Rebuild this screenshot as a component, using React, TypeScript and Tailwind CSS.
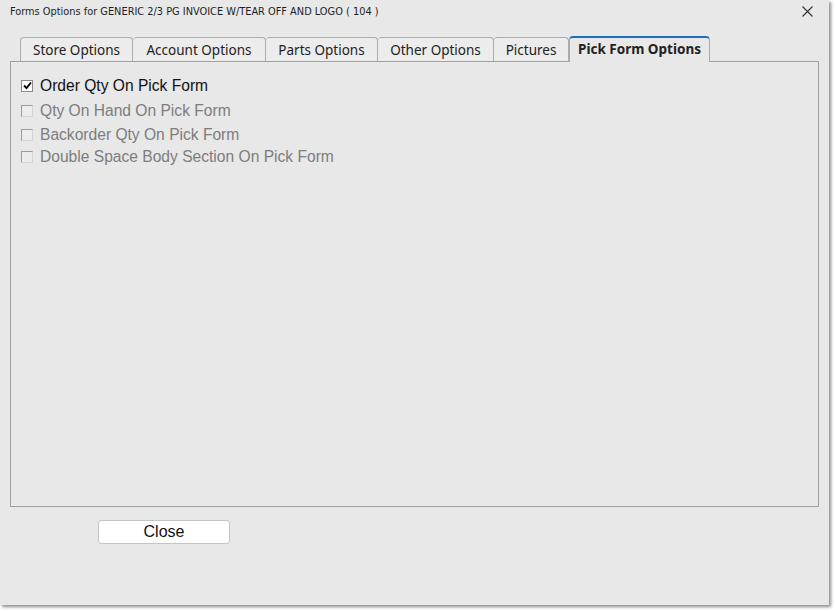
import React, { useState } from 'react';

const tabs = [
  { label: 'Store Options', w: 113 },
  { label: 'Account Options', w: 133 },
  { label: 'Parts Options', w: 112 },
  { label: 'Other Options', w: 116 },
  { label: 'Pictures', w: 75 },
  { label: 'Pick Form Options', w: 141 },
];

const options = [
  { label: 'Order Qty On Pick Form', checked: true, enabled: true, h: 'h-[25px]' },
  { label: 'Qty On Hand On Pick Form', checked: false, enabled: false, h: 'h-[25px]' },
  { label: 'Backorder Qty On Pick Form', checked: false, enabled: false, h: 'h-[23px]' },
  { label: 'Double Space Body Section On Pick Form', checked: false, enabled: false, h: 'h-[22px]' },
];

const CheckBox: React.FC<{ checked: boolean; enabled: boolean }> = ({ checked, enabled }) => (
  <span
    className={`flex h-[12px] w-[12px] items-center justify-center border ${
      enabled
        ? 'border-[#8a8a8a] bg-white'
        : 'border-t-[#9c9c9c] border-l-[#9c9c9c] border-r-[#d4d4d4] border-b-[#d4d4d4] bg-[#ececec]'
    }`}
  >
    {checked && (
      <svg width="9" height="9" viewBox="0 0 9 9">
        <path d="M1 4.5 L3.5 7 L8 1.5" stroke="#000" strokeWidth="1.9" fill="none" />
      </svg>
    )}
  </span>
);

export default function App() {
  const [active, setActive] = useState(5);
  const [checks, setChecks] = useState(options.map((o) => o.checked));

  return (
    <div className="h-[611px] w-[835px] bg-white" style={{ fontFamily: '"Liberation Sans", Arial, sans-serif' }}>
      <div className="relative flex h-[605px] w-[829px] flex-col bg-[#e8e8e8] shadow-[2px_2px_3px_rgba(0,0,0,0.45)]">
        {/* Title bar */}
        <div className="flex h-[22px] items-center justify-between pl-[10px] pr-[16px] pt-[2px]">
          <span className="text-[10.9px] text-[#1e1e1e]" style={{ fontFamily: '"DejaVu Sans Condensed", "Liberation Sans", sans-serif' }}>
            Forms Options for GENERIC 2/3 PG INVOICE W/TEAR OFF AND LOGO ( 104 )
          </span>
          <svg width="11" height="11" viewBox="0 0 11 11" className="mt-[-2px]">
            <path d="M0.5 0.5 L10.5 10.5 M10.5 0.5 L0.5 10.5" stroke="#333" strokeWidth="1.1" />
          </svg>
        </div>

        {/* Tabs */}
        <div className="mt-[14px] flex h-[25px] items-end pl-[20px]" style={{ fontFamily: '"Noto Sans", "Open Sans", sans-serif' }}>
          {tabs.map((t, i) => {
            const isActive = i === active;
            return (
              <button
                key={t.label}
                onClick={() => setActive(i)}
                style={{ width: t.w }}
                className={`relative flex items-center justify-center rounded-t-[4px] text-[13.5px] ${
                  isActive
                    ? 'z-10 -mb-px h-[26px] border-x border-t-2 border-x-[#a8a8a8] border-t-[#1f6fc5] bg-[#e8e8e8] font-bold text-[#222]'
                    : `h-[24px] border-t border-r border-[#acacac] bg-[#ececec] text-[#222] ${i === 0 ? 'border-l' : ''}`
                }`}
              >
                <span className={isActive ? 'mt-[-1px]' : 'mt-[2px]'}>{t.label}</span>
              </button>
            );
          })}
        </div>

        {/* Panel */}
        <div className="mx-[10px] h-[446px] border border-[#a0a0a0] bg-[#e8e8e8] pl-[10px] pt-[11px]">
          {options.map((o, i) => (
            <label
              key={o.label}
              className={`flex ${o.h} items-center gap-[7px] text-[15.6px] ${o.enabled ? 'text-[#111]' : 'text-[#7d7d7d]'}`}
              onClick={() => o.enabled && setChecks(checks.map((c, j) => (j === i ? !c : c)))}
            >
              <CheckBox checked={checks[i]} enabled={o.enabled} />
              <span>{o.label}</span>
            </label>
          ))}
        </div>

        {/* Footer */}
        <div className="pl-[98px] pt-[13px]">
          <button className="flex h-[24px] w-[132px] items-center justify-center rounded-[3px] border border-[#c4c4c4] bg-white text-[16px] text-[#111]">
            Close
          </button>
        </div>
      </div>
    </div>
  );
}
